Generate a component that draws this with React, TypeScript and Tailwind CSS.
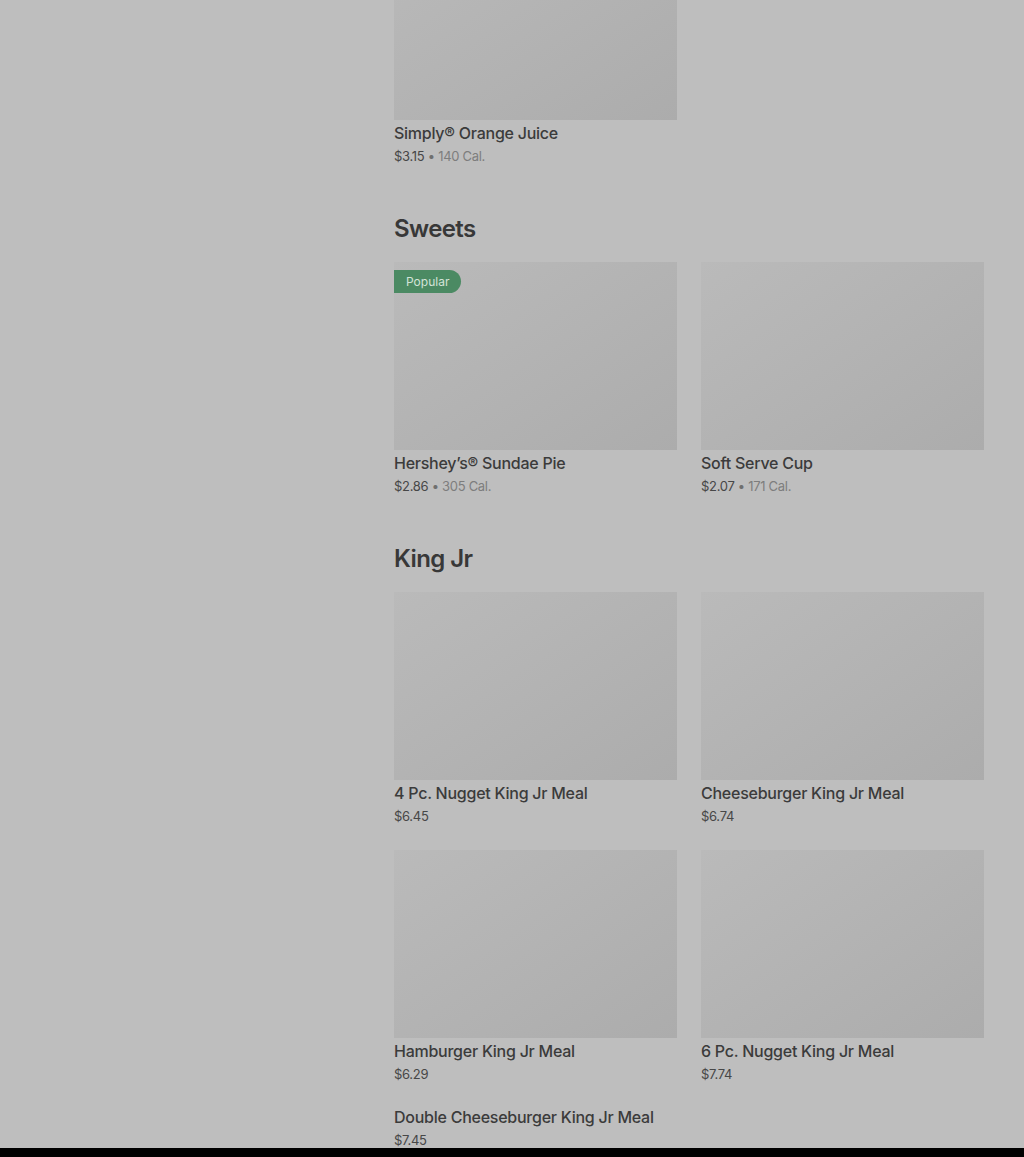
import React from 'react';

type Item = {
  name: string;
  price: string;
  cal?: string;
  popular?: boolean;
  noImage?: boolean;
};

const sections: { title?: string; items: Item[] }[] = [
  { items: [{ name: 'Simply® Orange Juice', price: '$3.15', cal: '140 Cal.' }] },
  {
    title: 'Sweets',
    items: [
      { name: 'Hershey’s® Sundae Pie', price: '$2.86', cal: '305 Cal.', popular: true },
      { name: 'Soft Serve Cup', price: '$2.07', cal: '171 Cal.' },
    ],
  },
  {
    title: 'King Jr',
    items: [
      { name: '4 Pc. Nugget King Jr Meal', price: '$6.45' },
      { name: 'Cheeseburger King Jr Meal', price: '$6.74' },
      { name: 'Hamburger King Jr Meal', price: '$6.29' },
      { name: '6 Pc. Nugget King Jr Meal', price: '$7.74' },
      { name: 'Double Cheeseburger King Jr Meal', price: '$7.45', noImage: true },
    ],
  },
];

const ItemCard: React.FC<{ item: Item }> = ({ item }) => (
  <div className={`flex flex-col ${item.noImage ? '-mt-[2px]' : ''}`}>
    {!item.noImage && (
      <div className="relative h-[188px] w-full bg-gradient-to-br from-[#bababa] to-[#acacac]">
        {item.popular && (
          <span className="absolute left-0 top-2 rounded-r-full bg-[#4b8a63] px-3 py-[3px] text-[12px] leading-[17px] text-[#d3e3d8]">
            Popular
          </span>
        )}
      </div>
    )}
    <div className={`${item.noImage ? '' : 'mt-[2px]'} text-[16px] font-medium leading-[22px] tracking-[-0.25px] text-[#3b3b3b]`}>
      {item.name}
    </div>
    <div className="mt-[2px] text-[13px] leading-[20px] tracking-[-0.3px] text-[#474747]">
      {item.price}
      {item.cal && (
        <>
          <span className="text-[#6f6f6f]"> • </span>
          <span className="text-[#7d7d7d]">{item.cal}</span>
        </>
      )}
    </div>
  </div>
);

export default function App() {
  return (
    <div className="relative h-[1157px] overflow-hidden bg-[#bebebe] font-['Inter',sans-serif]">
      <div className="ml-[394px] w-[590px] -mt-[68px] flex flex-col">
        {sections.map((s, i) => (
          <section key={i} className={i === 0 ? '' : 'mt-[47px]'}>
            {s.title && (
              <h2 className="mb-[17px] text-[24px] font-semibold leading-[32px] tracking-[-0.6px] text-[#383838]">
                {s.title}
              </h2>
            )}
            <div className="grid grid-cols-2 gap-x-6 gap-y-6">
              {s.items.map((it) => (
                <ItemCard key={it.name} item={it} />
              ))}
            </div>
          </section>
        ))}
      </div>
      <div className="absolute bottom-0 left-0 right-0 h-[9px] bg-black" />
    </div>
  );
}
